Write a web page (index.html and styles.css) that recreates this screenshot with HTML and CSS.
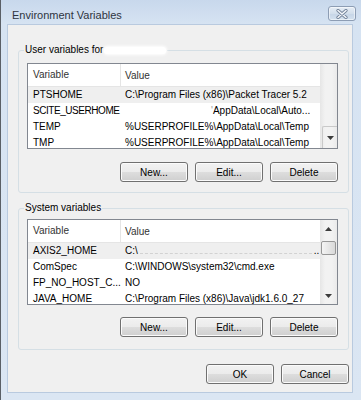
FILE: index.html
```html
<!DOCTYPE html>
<html lang="en">
<head>
    <meta charset="UTF-8">
    <meta name="viewport" content="width=device-width, initial-scale=1.0">
    <title>Environment Variables</title>
    <link rel="stylesheet" href="styles.css">
</head>
<body>
    <div class="window">
        <div class="titlebar">
            <span class="title">Environment Variables</span>
            <button class="close" title="Close">
                <svg width="12" height="10" viewBox="0 0 12 10">
                    <path d="M2 1.5 L10 8.5 M10 1.5 L2 8.5" stroke="#6f7f96" stroke-width="3.2" stroke-linecap="round"/>
                    <path d="M2 1.5 L10 8.5 M10 1.5 L2 8.5" stroke="#f4f7fb" stroke-width="1.6" stroke-linecap="round"/>
                </svg>
            </button>
        </div>

        <div class="client">
            <fieldset class="group user-group">
                <legend>User variables for<span class="redact"></span></legend>
                <div class="list">
                    <div class="list-body">
                        <div class="list-head">
                            <span class="col-var">Variable</span>
                            <span class="col-val">Value</span>
                        </div>
                        <div class="row selected">
                            <span class="col-var">PTSHOME</span>
                            <span class="col-val">C:\Program Files (x86)\Packet Tracer 5.2</span>
                        </div>
                        <div class="row">
                            <span class="col-var tight">SCITE_USERHOME</span>
                            <span class="col-val hidden-start"><span class="faint">'</span>AppData\Local\Auto...</span>
                        </div>
                        <div class="row">
                            <span class="col-var">TEMP</span>
                            <span class="col-val">%USERPROFILE%\AppData\Local\Temp</span>
                        </div>
                        <div class="row">
                            <span class="col-var">TMP</span>
                            <span class="col-val">%USERPROFILE%\AppData\Local\Temp</span>
                        </div>
                    </div>
                    <div class="scrollbar">
                        <div class="track"></div>
                        <div class="arrow boxed">
                            <svg width="7" height="4" viewBox="0 0 7 4"><path d="M0 0 H7 L3.5 4 Z" fill="#3c3c3c"/></svg>
                        </div>
                    </div>
                </div>
                <div class="buttons">
                    <button class="button">New...</button>
                    <button class="button">Edit...</button>
                    <button class="button">Delete</button>
                </div>
            </fieldset>

            <fieldset class="group system-group">
                <legend>System variables</legend>
                <div class="list">
                    <div class="list-body">
                        <div class="list-head">
                            <span class="col-var">Variable</span>
                            <span class="col-val">Value</span>
                        </div>
                        <div class="row selected">
                            <span class="col-var">AXIS2_HOME</span>
                            <span class="col-val">C:\<span class="smudge"></span>..</span>
                        </div>
                        <div class="row">
                            <span class="col-var">ComSpec</span>
                            <span class="col-val">C:\WINDOWS\system32\cmd.exe</span>
                        </div>
                        <div class="row">
                            <span class="col-var">FP_NO_HOST_C...</span>
                            <span class="col-val">NO</span>
                        </div>
                        <div class="row">
                            <span class="col-var">JAVA_HOME</span>
                            <span class="col-val">C:\Program Files (x86)\Java\jdk1.6.0_27</span>
                        </div>
                    </div>
                    <div class="scrollbar">
                        <div class="arrow">
                            <svg width="7" height="4" viewBox="0 0 7 4"><path d="M0 4 H7 L3.5 0 Z" fill="#3c3c3c"/></svg>
                        </div>
                        <div class="track">
                            <div class="thumb"></div>
                        </div>
                        <div class="arrow">
                            <svg width="7" height="4" viewBox="0 0 7 4"><path d="M0 0 H7 L3.5 4 Z" fill="#3c3c3c"/></svg>
                        </div>
                    </div>
                </div>
                <div class="buttons">
                    <button class="button">New...</button>
                    <button class="button">Edit...</button>
                    <button class="button">Delete</button>
                </div>
            </fieldset>

            <div class="dialog-buttons">
                <button class="button">OK</button>
                <button class="button">Cancel</button>
            </div>
        </div>
    </div>
</body>
</html>
```

FILE: styles.css
```css
* {
    margin: 0;
    padding: 0;
    box-sizing: border-box;
}

body {
    width: 361px;
    height: 400px;
    overflow: hidden;
    font-family: 'Liberation Sans', Arial, sans-serif;
    font-size: 10px;
    color: #000;
    background: #dbe6f3;
}

.window {
    display: flex;
    flex-direction: column;
    width: 361px;
    height: 400px;
    border-left: 1px solid #5a5f66;
    background: linear-gradient(to bottom, #c8d8ec 0px, #d6e3f2 24px, #dbe6f3 100%);
}

.titlebar {
    display: flex;
    align-items: center;
    height: 24px;
    padding: 3px 5px 0 11px;
}

.title {
    font-size: 11px;
    color: #2e3440;
    margin-top: 3px;
}

.close {
    display: flex;
    align-items: center;
    justify-content: center;
    margin-left: auto;
    width: 28px;
    height: 15px;
    border: 1px solid #8d9db4;
    border-radius: 3px;
    background: linear-gradient(to bottom, #e6edf6, #d3dfec 50%, #c6d5e7 51%, #d4e1ef);
    box-shadow: inset 0 0 0 1px rgba(255, 255, 255, 0.5);
}

.client {
    flex: 1;
    margin: 0 8px 7px 6px;
    padding: 18px 3px 7px 10px;
    border: 1px solid #b9cadf;
    background: #f0f0f0;
}

.group {
    border: 1px solid #d5dfe5;
    border-radius: 3px;
    padding: 6px 10px 10px 8px;
}

.group legend {
    margin-left: -3px;
    padding: 0 1px;
    line-height: 14px;
    font-size: 10px;
    color: #000;
}

.system-group {
    margin-top: 8px;
    padding-top: 4px;
    padding-bottom: 12px;
}

.redact {
    display: inline-block;
    width: 62px;
    height: 7px;
    margin-left: 1px;
    vertical-align: middle;
    border-radius: 4px;
    background: #fff;
    box-shadow: 0 0 3px 1px #fff;
}

.list {
    display: flex;
    height: 86px;
    border: 1px solid #828790;
    background: #fff;
}

.list-body {
    flex: 1;
    overflow: hidden;
}

.list-head {
    display: flex;
    align-items: center;
    height: 23px;
    border-bottom: 1px solid #e5e5e5;
    color: #333;
}

.list-head .col-var {
    border-right: 1px solid #e5e5e5;
    line-height: 22px;
}

.row {
    display: flex;
    height: 16px;
    line-height: 16px;
    white-space: nowrap;
}

.row.selected {
    background: #efefef;
}

.col-var {
    flex: none;
    width: 93px;
    padding-left: 5px;
    overflow: hidden;
    white-space: nowrap;
}

.col-var.tight {
    letter-spacing: -0.45px;
}

.col-val {
    flex: 1;
    padding-left: 4px;
    overflow: hidden;
    white-space: nowrap;
}

.hidden-start {
    padding-left: 90px;
}

.faint {
    color: #9a9a9a;
}

.smudge {
    display: inline-block;
    width: 172px;
    height: 6px;
    margin: 0 2px;
    border-bottom: 1px dashed #d2d2d2;
}

.scrollbar {
    display: flex;
    flex-direction: column;
    width: 17px;
    background: linear-gradient(to right, #e6e6e6, #f2f2f2 30%, #f2f2f2 70%, #eaeaea);
}

.track {
    flex: 1;
    padding-top: 4px;
}

.arrow {
    display: flex;
    align-items: center;
    justify-content: center;
    height: 17px;
}

.arrow.boxed {
    height: 22px;
    margin-left: 2px;
    border-top: 1px solid #c9c9c9;
    border-left: 1px solid #c9c9c9;
    border-top-left-radius: 2px;
}

.thumb {
    width: 15px;
    height: 14px;
    margin-left: 1px;
    border: 1px solid #979797;
    border-radius: 2px;
    background: linear-gradient(to right, #f4f4f4, #e6e6e6 50%, #d9d9d9);
}

.buttons,
.dialog-buttons {
    display: flex;
    justify-content: flex-end;
    gap: 7px;
    margin-top: 13px;
}

.system-group .buttons {
    margin-top: 12px;
}

.dialog-buttons {
    margin-top: 14px;
}

.button {
    width: 68px;
    height: 20px;
    border: 1px solid #707070;
    border-radius: 3px;
    background: linear-gradient(to bottom, #f2f2f2 0%, #ebebeb 50%, #dddddd 51%, #cfcfcf 100%);
    box-shadow: inset 0 0 0 1px #fbfbfb;
    font-family: 'Liberation Sans', Arial, sans-serif;
    font-size: 10px;
    color: #000;
}
```
